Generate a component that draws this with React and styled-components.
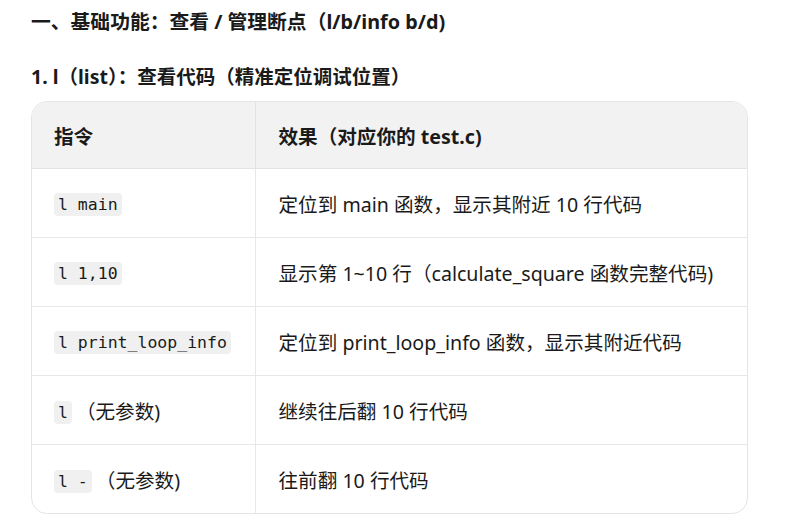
import styled, { createGlobalStyle } from 'styled-components';

const GlobalStyle = createGlobalStyle`
  body {
    margin: 0;
    background: #ffffff;
    color: #1a1a1a;
    font-family: "Noto Sans", "Noto Sans CJK SC", sans-serif;
  }
`;

const rows = [
  { cmd: ['l main'], desc: '定位到 main 函数，显示其附近 10 行代码' },
  { cmd: ['l 1,10'], desc: '显示第 1~10 行（calculate_square 函数完整代码)' },
  { cmd: ['l print_loop_info'], desc: '定位到 print_loop_info 函数，显示其附近代码' },
  { cmd: ['l', '（无参数)'], desc: '继续往后翻 10 行代码' },
  { cmd: ['l -', '（无参数)'], desc: '往前翻 10 行代码' },
];

export default function App() {
  return (
    <Page>
      <GlobalStyle />
      <Title>一、基础功能：查看 / 管理断点（l/b/info b/d)</Title>
      <SubTitle>1. l（list）：查看代码（精准定位调试位置）</SubTitle>
      <TableWrap>
        <Table>
          <colgroup>
            <Col $width="223px" />
            <Col />
          </colgroup>
          <thead>
            <tr>
              <Th $first>指令</Th>
              <Th>效果（对应你的 test.c)</Th>
            </tr>
          </thead>
          <tbody>
            {rows.map((row, idx) => (
              <tr key={idx}>
                <Td $first $last={idx === rows.length - 1}>
                  <Code>{row.cmd[0]}</Code>
                  {row.cmd[1] && <Note>{row.cmd[1]}</Note>}
                </Td>
                <Td $last={idx === rows.length - 1}>{row.desc}</Td>
              </tr>
            ))}
          </tbody>
        </Table>
      </TableWrap>
    </Page>
  );
}

const Page = styled.div`
  padding: 8px 0 0 31px;
  width: 717px;
`;

const Title = styled.h2`
  margin: 0;
  font-size: 19.8px;
  font-weight: 700;
  line-height: 28px;
`;

const SubTitle = styled.h3`
  margin: 27px 0 0;
  font-size: 19.5px;
  font-weight: 700;
  line-height: 28px;
`;

const TableWrap = styled.div`
  margin-top: 10px;
  border: 1px solid #e5e5e5;
  border-radius: 16px;
  overflow: hidden;
`;

const Table = styled.table`
  width: 100%;
  table-layout: fixed;
  border-collapse: collapse;
  font-size: 19.6px;
`;

const Col = styled.col`
  width: ${(p) => p.$width || 'auto'};
`;

const Th = styled.th`
  height: 66px;
  padding: 0 23px 0 ${(p) => (p.$first ? '22px' : '23px')};
  text-align: left;
  font-weight: 700;
  background: #f2f2f2;
  border-bottom: 1px solid #e3e3e3;
  border-left: ${(p) => (p.$first ? 'none' : '1px solid #e3e3e3')};
`;

const Td = styled.td`
  height: 68px;
  padding: 0 23px 0 ${(p) => (p.$first ? '22px' : '23px')};
  border-bottom: ${(p) => (p.$last ? 'none' : '1px solid #e8e8e8')};
  border-left: ${(p) => (p.$first ? 'none' : '1px solid #e8e8e8')};
  white-space: nowrap;
`;

const Code = styled.code`
  font-family: "DejaVu Sans Mono", "Liberation Mono", monospace;
  font-size: 16.5px;
  background: #f0f0f0;
  border-radius: 4px;
  padding: 2px 4px;
  position: relative;
  top: -1px;
`;

const Note = styled.span`
  margin-left: 4px;
`;
